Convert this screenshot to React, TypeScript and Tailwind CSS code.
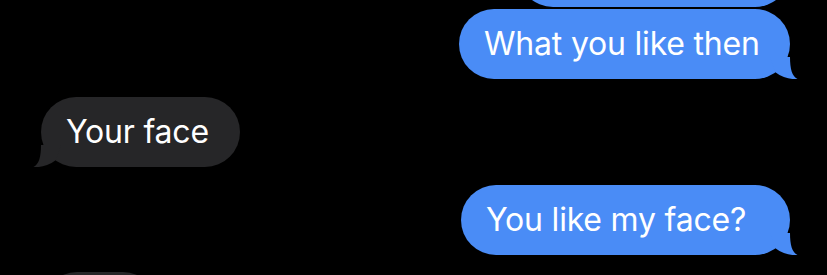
import React from 'react';

type Msg = { text: string; from: 'me' | 'them'; width: string };

const messages: Msg[] = [
    { text: 'What you like then', from: 'me', width: 'w-[331px]' },
    { text: 'Your face', from: 'them', width: 'w-[199px]' },
    { text: 'You like my face?', from: 'me', width: 'w-[329px]' },
];

const Tail = ({ side, color }: { side: 'left' | 'right'; color: string }) => (
    <svg
        className={`absolute bottom-0 w-[28px] h-[22px] ${side === 'right' ? '-right-[8px]' : '-left-[8px] -scale-x-100'}`}
        viewBox="0 0 28 22"
    >
        <path d="M0 0 L20 0 C20 12 22 19 27.5 22 C21 22.6 13 21 5 15 L0 0 Z" fill={color} />
    </svg>
);

const Bubble = ({ msg }: { msg: Msg }) => {
    const mine = msg.from === 'me';
    return (
        <div className={`flex ${mine ? 'justify-end pr-[37px]' : 'justify-start pl-[41px]'}`}>
            <div
                className={`relative h-[70px] ${msg.width} rounded-[35px] pl-[25px] flex items-center text-[32px] text-white tracking-[-0.2px] whitespace-nowrap ${mine ? 'bg-[#4a8cf6]' : 'bg-[#262628]'}`}
            >
                <span className="relative z-10">{msg.text}</span>
                <Tail side={mine ? 'right' : 'left'} color={mine ? '#4a8cf6' : '#262628'} />
            </div>
        </div>
    );
};

export default function App() {
    return (
        <div className="h-[275px] w-[827px] overflow-hidden bg-black" style={{ fontFamily: 'Inter, "Noto Sans", sans-serif' }}>
            <div className="flex flex-col -mt-[63px]">
                {/* previous message, cut off at the top */}
                <div className="flex justify-end pr-[37px]">
                    <div className="h-[70px] w-[272px] rounded-[35px] bg-[#4a8cf6]" />
                </div>
                <div className="mt-[2px]">
                    <Bubble msg={messages[0]} />
                </div>
                <div className="mt-[18px]">
                    <Bubble msg={messages[1]} />
                </div>
                <div className="mt-[18px]">
                    <Bubble msg={messages[2]} />
                </div>
                {/* next message, peeking at the bottom */}
                <div className="mt-[17px] flex justify-start pl-[42px]">
                    <div className="h-[70px] w-[116px] rounded-[35px] bg-[#262628]" />
                </div>
            </div>
        </div>
    );
}
